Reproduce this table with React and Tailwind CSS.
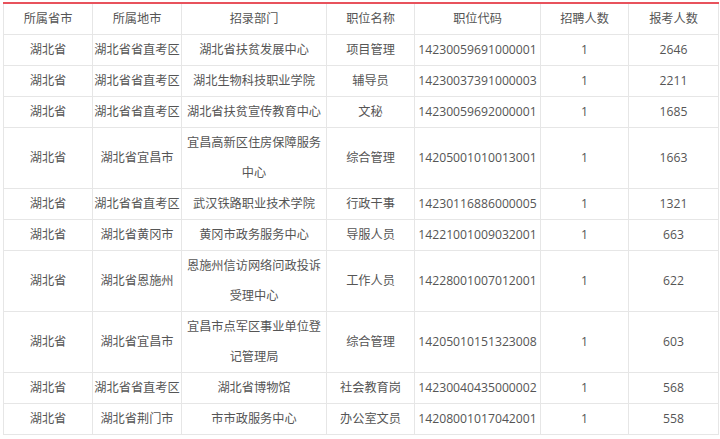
import React from 'react';

const head = ['所属省市', '所属地市', '招录部门', '职位名称', '职位代码', '招聘人数', '报考人数'];

const rows = [
  ['湖北省', '湖北省省直考区', '湖北省扶贫发展中心', '项目管理', '14230059691000001', '1', '2646'],
  ['湖北省', '湖北省省直考区', '湖北生物科技职业学院', '辅导员', '14230037391000003', '1', '2211'],
  ['湖北省', '湖北省省直考区', '湖北省扶贫宣传教育中心', '文秘', '14230059692000001', '1', '1685'],
  ['湖北省', '湖北省宜昌市', '宜昌高新区住房保障服务中心', '综合管理', '14205001010013001', '1', '1663'],
  ['湖北省', '湖北省省直考区', '武汉铁路职业技术学院', '行政干事', '14230116886000005', '1', '1321'],
  ['湖北省', '湖北省黄冈市', '黄冈市政务服务中心', '导服人员', '14221001009032001', '1', '663'],
  ['湖北省', '湖北省恩施州', '恩施州信访网络问政投诉受理中心', '工作人员', '14228001007012001', '1', '622'],
  ['湖北省', '湖北省宜昌市', '宜昌市点军区事业单位登记管理局', '综合管理', '14205010151323008', '1', '603'],
  ['湖北省', '湖北省省直考区', '湖北省博物馆', '社会教育岗', '14230040435000002', '1', '568'],
  ['湖北省', '湖北省荆门市', '市市政服务中心', '办公室文员', '14208001017042001', '1', '558'],
];

const widths = ['w-[89px]', 'w-[89px]', 'w-[145px]', 'w-[88px]', 'w-[126px]', 'w-[88px]', 'w-[90px]'];

export default function App() {
  return (
    <div className="w-[720px] h-[439px] bg-white pt-[2px] pl-[3px]" style={{ fontFamily: '"Open Sans", "Noto Sans CJK SC", sans-serif' }}>
      <table className="table-fixed border-collapse w-[716px] text-[12.2px] leading-[30px] text-[#555] border-t-2 border-t-[#e8525c]">
        <colgroup>
          {widths.map((w, i) => (
            <col key={i} className={w} />
          ))}
        </colgroup>
        <thead>
          <tr>
            {head.map((h) => (
              <th key={h} className="font-normal border border-[#e6e6e6] border-t-[#e8525c] border-t-2 px-0 text-center whitespace-nowrap">
                {h}
              </th>
            ))}
          </tr>
        </thead>
        <tbody>
          {rows.map((r, i) => (
            <tr key={i}>
              {r.map((c, j) => (
                <td
                  key={j}
                  className={
                    j === 2
                      ? 'border border-[#e6e6e6] px-[4px] text-center align-middle break-all'
                      : 'border border-[#e6e6e6] px-0 text-center align-middle whitespace-nowrap'
                  }
                >
                  {c}
                </td>
              ))}
            </tr>
          ))}
        </tbody>
      </table>
    </div>
  );
}
